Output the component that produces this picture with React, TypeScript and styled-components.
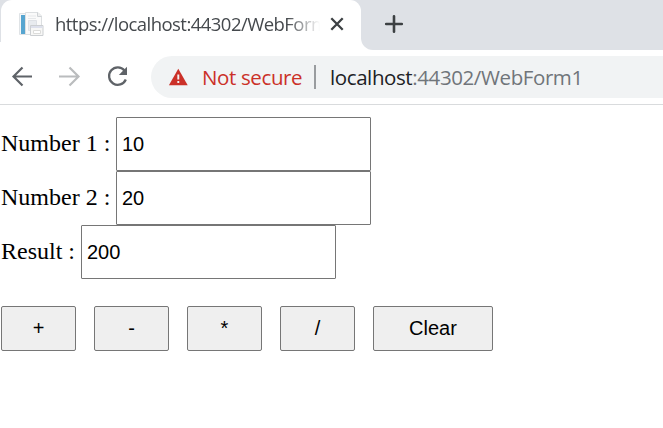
import React, { useState } from "react";
import styled, { createGlobalStyle } from "styled-components";

const GlobalStyle = createGlobalStyle`
  * { box-sizing: border-box; }
  body { margin: 0; background: #fff; overflow: hidden; }
`;

const Window = styled.div`
  width: 663px;
  height: 428px;
  overflow: hidden;
  background: #fff;
`;

const TabStrip = styled.header`
  display: flex;
  height: 50px;
  padding-left: 1px;
  background: linear-gradient(#dee1e6 0 42px, #fff 42px) 0 0 / 1px 50px no-repeat, #dee1e6;
`;

const Tab = styled.div`
  display: flex;
  align-items: center;
  width: 360px;
  height: 50px;
  padding: 0 0 2px 18px;
  background: #fff;
  border-radius: 11px 11px 0 0;
`;

const TabTitle = styled.span`
  width: 265px;
  margin-left: 11px;
  white-space: nowrap;
  font: 18.5px/26px "Open Sans", sans-serif;
  letter-spacing: -0.54px;
  color: #45494d;
  mask-image: linear-gradient(90deg, #000 232px, transparent 265px);
`;

const IconButton = styled.button<{ $size: number; $gap?: number }>`
  display: block;
  flex: none;
  width: ${(p) => p.$size}px;
  height: ${(p) => p.$size}px;
  margin: 0 0 0 ${(p) => p.$gap ?? 0}px;
  padding: 0;
  border: 0;
  background: none;
  svg { display: block; }
`;

const StripRest = styled.div`
  display: flex;
  flex: 1;
  align-items: center;
  padding: 0 0 2px 23px;
  background: #dee1e6;
  border-bottom-left-radius: 12px;
`;

const StripBase = styled.div`
  display: flex;
  flex: 1;
  background: #fff;
`;

const Toolbar = styled.nav`
  display: flex;
  align-items: center;
  height: 55px;
  padding: 0 0 1px 10px;
  border-bottom: 1px solid #d9dbdd;
`;

const AddressBar = styled.div`
  display: flex;
  align-items: center;
  flex: 1;
  height: 42px;
  margin-left: 21px;
  padding-left: 17px;
  border-radius: 21px 0 0 21px;
  background: #f1f3f4;
  font: 20.5px/28px "Open Sans", sans-serif;
  white-space: nowrap;
`;

const Security = styled.span`
  width: 100px;
  margin-left: 14px;
  color: #cb3028;
  letter-spacing: -0.37px;
`;

const Divider = styled.span`
  width: 2px;
  height: 24px;
  margin: 0 14px 0 12px;
  background: #999c9f;
`;

const Address = styled.span`
  color: #70757a;
  letter-spacing: -0.4px;
`;

const Host = styled.span`
  color: #202124;
`;

const Form = styled.form`
  padding: 12px 0 0 1px;
`;

const Field = styled.label<{ $labelWidth: number }>`
  display: grid;
  grid-template-columns: ${(p) => p.$labelWidth}px 255px;
  align-items: center;
  height: 54px;
  color: #000;
`;

const Caption = styled.span`
  padding-bottom: 2px;
  font: 24px/28px "Liberation Serif", "Times New Roman", serif;
  white-space: nowrap;
`;

const TextBox = styled.input`
  width: 255px;
  height: 54px;
  padding: 0 5px;
  border: 1px solid #767676;
  border-radius: 1px;
  background: #fff;
  font: 20px "Liberation Sans", Arial, sans-serif;
  color: #000;
  outline: none;
`;

const Actions = styled.div`
  display: flex;
  gap: 18px;
  margin-top: 27px;
`;

const ActionButton = styled.button<{ $wide?: boolean }>`
  width: ${(p) => (p.$wide ? 120 : 75)}px;
  height: 45px;
  padding: 0;
  border: 1px solid #767676;
  border-radius: 2px;
  background: #efefef;
  font: 20px "Liberation Sans", Arial, sans-serif;
  color: #000;
`;

const PageIcon = () => (
  <svg width="25" height="25" viewBox="0 0 25 25">
    <path d="M.5 1.500H8V22.500H.5Z" fill="#f5f7f8" stroke="#dfe3e6" />
    <path d="M2 3h4v19H2z" fill="#56a5d0" />
    <path d="M6.500 .5H19l3.500 3.500V22.500H6.500Z" fill="#fafafa" stroke="#dcdfe1" />
    <path d="M18.500 .5v4h4" fill="#eee" stroke="#cfd3d6" />
    <path d="M9 4h8M9 6.500h8" stroke="#e6e8ea" />
    <path d="M9.500 8.500h8v10h-8z" fill="#e8ebef" stroke="#dee1e6" />
    <path d="M11.500 13.500h12.500v10H11.500z" fill="#f7f7f6" stroke="#cccfd2" />
    <path d="M12 14h11.500v2H12z" fill="#dde0ec" />
    <path d="M14.500 18.500h7v3h-7z" fill="#fff" stroke="#dcdcda" />
  </svg>
);

const Arrow = ({ color, forward }: { color: string; forward?: boolean }) => (
  <svg width="24" height="24" viewBox="0 0 24 24" fill="none" stroke={color} strokeWidth="2.200">
    {forward ? (
      <path d="M1 11.500H20M11.500 2.500L20.500 11.500L11.500 20.500" />
    ) : (
      <path d="M22 11.500H3M12.500 2.500L3.500 11.500L12.500 20.500" />
    )}
  </svg>
);

const Reload = () => (
  <svg width="24" height="24" viewBox="0 0 24 24">
    <path d="M18.500 5.500A8.700 8.700 0 1 0 19.800 14.500" fill="none" stroke="#5f6368" strokeWidth="2.300" />
    <path d="M21 1.800V10H12.800Z" fill="#5f6368" />
  </svg>
);

const Warning = () => (
  <svg width="20" height="18" viewBox="0 0 20 18">
    <path d="M10.300 .8L19.700 17.200H.9Z" fill="#cb3028" />
    <path d="M10.300 6.500v5M10.300 13v2" stroke="#f1f3f4" strokeWidth="1.900" />
  </svg>
);

export default function App() {
  const [first, setFirst] = useState("10");
  const [second, setSecond] = useState("20");
  const [result, setResult] = useState("200");
  const a = Number(first);
  const b = Number(second);

  return (
    <Window>
      <GlobalStyle />
      <TabStrip>
        <Tab>
          <PageIcon />
          <TabTitle>https://localhost:44302/WebForm</TabTitle>
          <IconButton $size={14} $gap={10} aria-label="Close tab">
            <svg width="14" height="14" viewBox="0 0 14 14" stroke="#3c4043" strokeWidth="2.300">
              <path d="M1.300 1.300L12.700 12.700M12.700 1.300L1.300 12.700" />
            </svg>
          </IconButton>
        </Tab>
        <StripBase>
          <StripRest>
            <IconButton $size={20} aria-label="New tab">
              <svg width="20" height="20" viewBox="0 0 20 20" stroke="#3c4043" strokeWidth="2.600" strokeLinecap="round">
                <path d="M10 2.200V17.800M2.200 10H17.800" />
              </svg>
            </IconButton>
          </StripRest>
        </StripBase>
      </TabStrip>
      <Toolbar>
        <IconButton $size={24} aria-label="Back"><Arrow color="#5f6368" /></IconButton>
        <IconButton $size={24} $gap={24} aria-label="Forward"><Arrow forward color="#babcbe" /></IconButton>
        <IconButton $size={24} $gap={24} aria-label="Reload"><Reload /></IconButton>
        <AddressBar>
          <Warning />
          <Security>Not secure</Security>
          <Divider />
          <Address><Host>localhost</Host>:44302/WebForm1</Address>
        </AddressBar>
      </Toolbar>
      <Form onSubmit={(e) => e.preventDefault()}>
        <Field $labelWidth={115}>
          <Caption>Number 1 :</Caption>
          <TextBox value={first} onChange={(e) => setFirst(e.target.value)} />
        </Field>
        <Field $labelWidth={115}>
          <Caption>Number 2 :</Caption>
          <TextBox value={second} onChange={(e) => setSecond(e.target.value)} />
        </Field>
        <Field $labelWidth={80}>
          <Caption>Result :</Caption>
          <TextBox value={result} readOnly />
        </Field>
        <Actions>
          <ActionButton onClick={() => setResult(String(a + b))}>+</ActionButton>
          <ActionButton onClick={() => setResult(String(a - b))}>-</ActionButton>
          <ActionButton onClick={() => setResult(String(a * b))}>*</ActionButton>
          <ActionButton onClick={() => setResult(String(a / b))}>/</ActionButton>
          <ActionButton
            $wide
            onClick={() => {
              setFirst("");
              setSecond("");
              setResult("");
            }}
          >
            Clear
          </ActionButton>
        </Actions>
      </Form>
    </Window>
  );
}
